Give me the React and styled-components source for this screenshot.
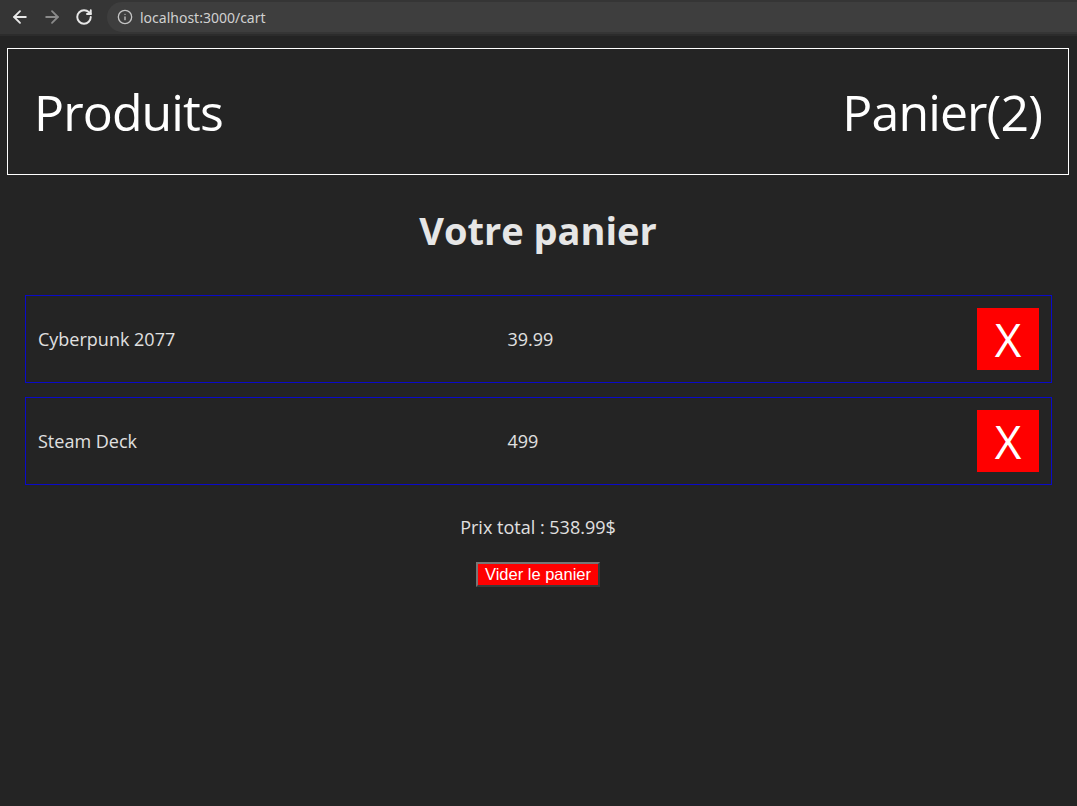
import styled, { createGlobalStyle } from "styled-components"
import { ArrowLeft, ArrowRight, RotateCw, Info } from "lucide-react"

const GlobalStyle = createGlobalStyle`
    html, body {
        margin : 0;
        padding : 0;
        background : #242424;
    }
    body {
        font-family : "Open Sans", "Noto Sans", sans-serif;
    }
`

const Window = styled.div`
    width : 1077px;
    height : 806px;
    display : flex;
    flex-direction : column;
    background : #242424;
    overflow : hidden;
`
const Toolbar = styled.div`
    height : 34px;
    flex-shrink : 0;
    display : flex;
    align-items : center;
    background : #353535;
    border-bottom : 2px solid #2c2c2c;
    padding-left : 4px;
`
const NavButton = styled.div`
    width : 32px;
    height : 32px;
    display : flex;
    align-items : center;
    justify-content : center;
    color : ${props => props.$dim ? "#8a8a8a" : "#e8e8e8"};
`
const AddressBar = styled.div`
    flex : 1;
    height : 30px;
    margin-left : 7px;
    margin-right : -20px;
    border-radius : 15px;
    background : #3e3e3e;
    display : flex;
    align-items : center;
    gap : 7px;
    padding-left : 10px;
    color : #c4c4c4;
`
const Url = styled.span`
    font-family : "Noto Sans", "Open Sans", sans-serif;
    font-size : 14px;
    color : #d0d0d0;
`
const Page = styled.div`
    flex : 1;
    padding : 12px 8px 0 7px;
`
const Header = styled.div`
    height : 125px;
    border : 1px solid #ffffff;
    display : flex;
    align-items : center;
    justify-content : space-between;
    padding : 0 26px;
    color : #ffffff;
`
const NavLink = styled.div`
    font-size : 50px;
    line-height : 1;
    letter-spacing : -0.9px;
`
const Title = styled.h1`
    margin : 35px 0 45px;
    text-align : center;
    font-size : 38px;
    line-height : 40px;
    font-weight : 700;
    color : #e6e6e6;
`
const List = styled.div`
    padding : 0 17px 0 18px;
    display : flex;
    flex-direction : column;
    gap : 14px;
`
const Item = styled.div`
    display : grid;
    grid-template-columns : 1fr 1fr 62px;
    align-items : center;
    padding : 12px;
    border : 1px solid #0a0ac8;
    font-size : 18px;
    color : #e0e0e0;
`
const RemoveButton = styled.button`
    width : 62px;
    height : 62px;
    border : none;
    padding : 0;
    background : #ff0000;
    color : #ffffff;
    font-family : "Open Sans", sans-serif;
    font-size : 46px;
    font-weight : 400;
    line-height : 1;
    display : flex;
    align-items : center;
    justify-content : center;
    cursor : pointer;
`
const Footer = styled.div`
    display : flex;
    flex-direction : column;
    align-items : center;
    gap : 23px;
    margin-top : 30px;
`
const Total = styled.div`
    font-size : 18px;
    line-height : 24px;
    color : #e0e0e0;
`
const ClearButton = styled.button`
    height : 25px;
    padding : 0 7px;
    background : #ff0000;
    color : #ffffff;
    font-family : "Liberation Sans", Arial, sans-serif;
    font-size : 16.5px;
    border : 2px solid;
    border-color : #767676 #3a3a3a #3a3a3a #767676;
    cursor : pointer;
`

const items = [
    { id : 1, name : "Cyberpunk 2077", price : 39.99 },
    { id : 2, name : "Steam Deck", price : 499 },
]

const App = () => {
    const total = items.reduce((sum, item) => sum + item.price, 0)
    return (
        <Window>
            <GlobalStyle />
            <Toolbar>
                <NavButton><ArrowLeft size={20} strokeWidth={2.2} /></NavButton>
                <NavButton $dim><ArrowRight size={20} strokeWidth={2.2} /></NavButton>
                <NavButton><RotateCw size={18} strokeWidth={2.6} /></NavButton>
                <AddressBar>
                    <Info size={16} strokeWidth={2} />
                    <Url>localhost:3000/cart</Url>
                </AddressBar>
            </Toolbar>
            <Page>
                <Header>
                    <NavLink>Produits</NavLink>
                    <NavLink>Panier({items.length})</NavLink>
                </Header>
                <Title>Votre panier</Title>
                <List>
                    {items.map(item => (
                        <Item key={item.id}>
                            <span>{item.name}</span>
                            <span>{item.price}</span>
                            <RemoveButton>X</RemoveButton>
                        </Item>
                    ))}
                </List>
                <Footer>
                    <Total>Prix total : {total.toFixed(2)}$</Total>
                    <ClearButton>Vider le panier</ClearButton>
                </Footer>
            </Page>
        </Window>
    )
}

export default App
